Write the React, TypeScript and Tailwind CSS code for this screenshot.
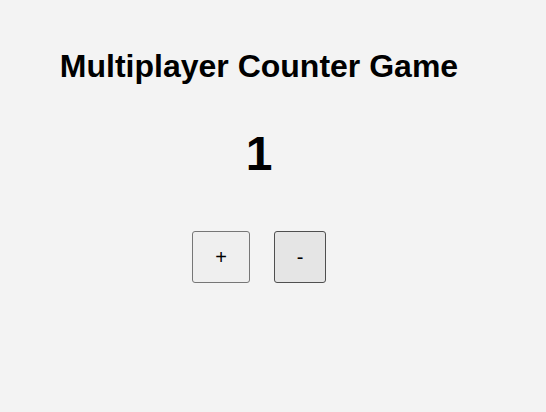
import { useState } from 'react';

export default function App() {
  const [count, setCount] = useState(1);

  return (
    <div className="min-h-[412px] w-full bg-[#f3f3f3] font-['Liberation_Sans',Arial,sans-serif] text-black">
      <div className="flex w-[518px] flex-col items-center pt-[48px]">
        <h1 className="text-[32px] font-bold leading-[37px]">Multiplayer Counter Game</h1>
        <div className="mt-[41px] text-[48px] font-bold leading-[56px]">{count}</div>
        <div className="mt-[49px] flex gap-[24px]">
          <button
            onClick={() => setCount(count + 1)}
            className="h-[52px] w-[58px] rounded-[3px] border border-[#767676] bg-[#efefef] text-[20px] leading-none"
          >
            +
          </button>
          <button
            onClick={() => setCount(count - 1)}
            className="h-[52px] w-[52px] rounded-[3px] border border-[#4f4f4f] bg-[#e5e5e5] text-[20px] leading-none"
          >
            -
          </button>
        </div>
      </div>
    </div>
  );
}
